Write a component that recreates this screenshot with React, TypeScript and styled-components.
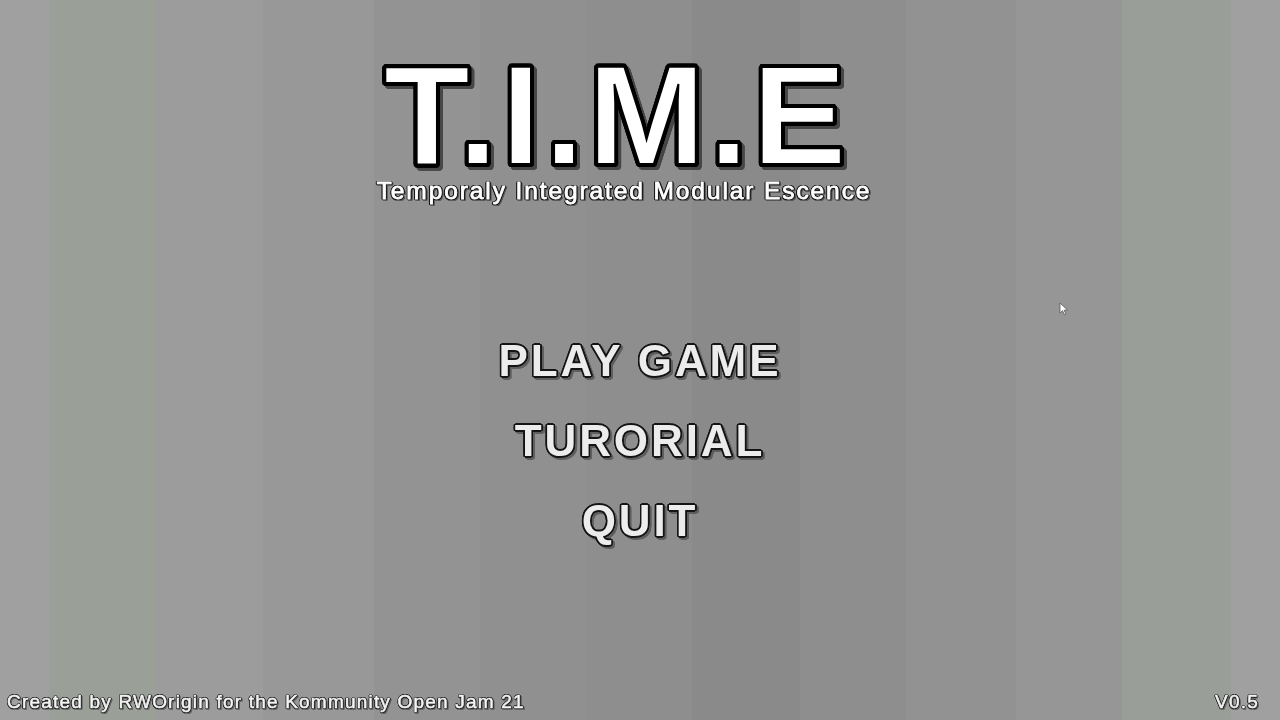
import styled, { createGlobalStyle } from 'styled-components'

// outline made of text-shadows around the glyph
const outline = (r: number, color: string, steps = 16) =>
  Array.from({ length: steps }, (_, i) => {
    const a = (i / steps) * Math.PI * 2
    return `${(Math.cos(a) * r).toFixed(2)}px ${(Math.sin(a) * r).toFixed(2)}px 0 ${color}`
  }).join(', ')

const GlobalStyle = createGlobalStyle`
  html, body {
    margin: 0;
    padding: 0;
    background: #8e8e8e;
    overflow: hidden;
  }
  * {
    box-sizing: border-box;
  }
`

const Screen = styled.main`
  position: relative;
  width: 1280px;
  height: 720px;
  display: flex;
  flex-direction: column;
  font-family: 'Liberation Sans', Arial, sans-serif;
  background: linear-gradient(
    to right,
    #a0a0a0 0 49px,
    #9aa098 49px 155px,
    #9c9c9c 155px 263px,
    #989898 263px 374px,
    #939393 374px 480px,
    #909090 480px 586px,
    #8e8e8e 586px 692px,
    #8a8a8a 692px 800px,
    #8e8e8e 800px 906px,
    #929292 906px 1016px,
    #969696 1016px 1122px,
    #9a9e98 1122px 1231px,
    #a0a0a0 1231px 1280px
  );
`

const Header = styled.header`
  display: flex;
  flex-direction: column;
  align-items: center;
  padding-top: 60px;
`

const Title = styled.h1`
  margin: 0;
  padding-right: 46px;
  font-size: 141px;
  line-height: 110px;
  font-weight: 700;
  letter-spacing: 4px;
  color: #ffffff;
  -webkit-text-stroke: 2px #000;
  text-shadow: ${outline(3, '#000', 24)};
  filter: drop-shadow(3px 3px 0 rgba(45, 45, 45, 0.75));
`

const Subtitle = styled.p`
  margin: 9px 0 0;
  padding-right: 32px;
  font-size: 24.5px;
  line-height: 24px;
  letter-spacing: 1.9px;
  color: #ffffff;
  -webkit-text-stroke: 0.8px #ffffff;
  text-shadow: ${outline(1.3, '#1a1a1a')};
  filter: drop-shadow(1px 1px 0 rgba(50, 50, 50, 0.6));
`

const Menu = styled.nav`
  display: flex;
  flex-direction: column;
  align-items: center;
  margin-top: 118px;
`

const MenuItem = styled.button`
  border: 0;
  background: none;
  padding: 0;
  cursor: pointer;
  font-family: inherit;
  font-size: 44px;
  font-weight: 700;
  letter-spacing: 2.9px;
  line-height: 80px;
  color: #ececec;
  text-shadow: ${outline(1.6, '#151515')};
  filter: drop-shadow(2px 2px 0 rgba(55, 55, 55, 0.55));
`

const Footer = styled.footer`
  margin-top: auto;
  display: flex;
  justify-content: space-between;
  padding: 0 21px 7px 7px;
`

const FooterText = styled.span`
  font-size: 19px;
  line-height: 22px;
  letter-spacing: 1.2px;
  color: #f4f4f4;
  -webkit-text-stroke: 0.5px #f4f4f4;
  text-shadow: ${outline(1, '#2a2a2a', 12)};
  filter: drop-shadow(1px 1px 0 rgba(50, 50, 50, 0.5));
`

const Pointer = styled.svg`
  position: absolute;
  left: 1059px;
  top: 302px;
`

export default function App() {
  return (
    <>
      <GlobalStyle />
      <Screen>
        <Header>
          <Title>T.I.M.E</Title>
          <Subtitle>Temporaly Integrated Modular Escence</Subtitle>
        </Header>
        <Menu>
          <MenuItem>PLAY GAME</MenuItem>
          <MenuItem>TURORIAL</MenuItem>
          <MenuItem>QUIT</MenuItem>
        </Menu>
        <Footer>
          <FooterText>Created by RWOrigin for the Kommunity Open Jam 21</FooterText>
          <FooterText>V0.5</FooterText>
        </Footer>
        <Pointer width="10" height="14" viewBox="0 0 10 14">
          <path d="M1 1 L1 11 L3.5 8.8 L5.5 12.8 L7 12 L5 8.2 L8.5 8 Z" fill="#fff" stroke="#555" strokeWidth="0.8" />
        </Pointer>
      </Screen>
    </>
  )
}
